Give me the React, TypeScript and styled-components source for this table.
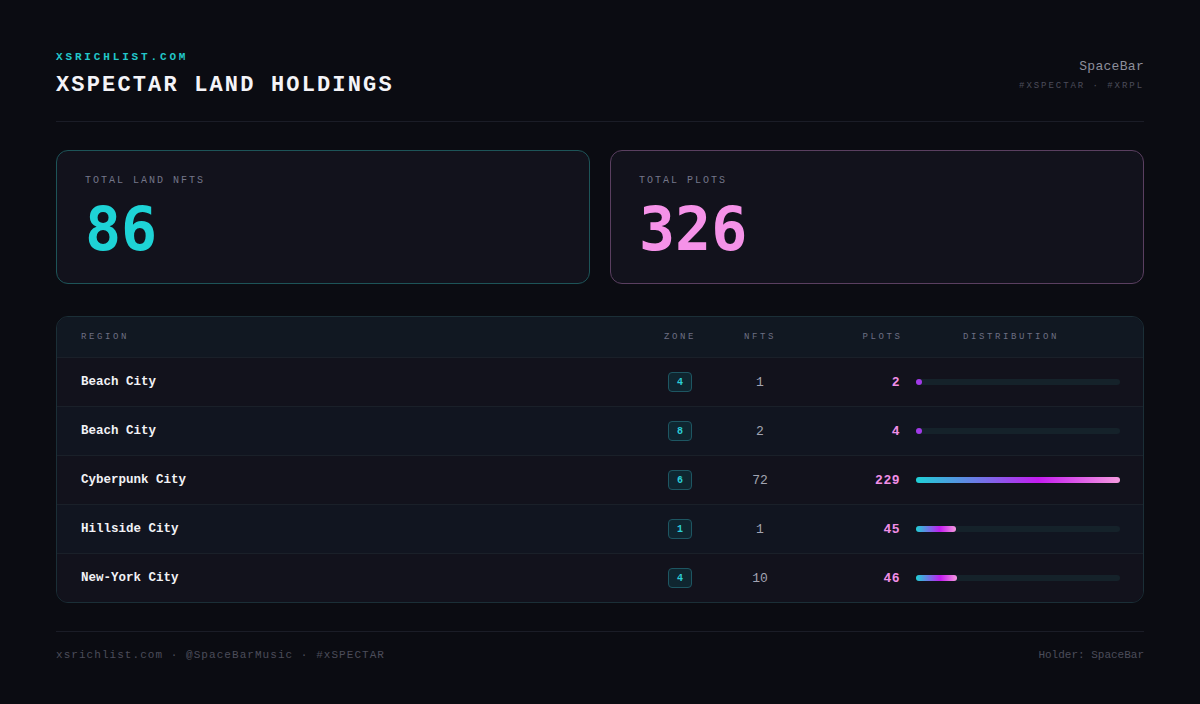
import React from "react";
import styled, { createGlobalStyle } from "styled-components";

const MONO = `"Liberation Mono", "Courier New", monospace`;

const Global = createGlobalStyle`
  html, body { margin: 0; padding: 0; background: #0b0c12; }
  body { font-family: ${MONO}; }
`;

const Page = styled.div`
  width: 1200px;
  height: 704px;
  box-sizing: border-box;
  padding: 51px 56px 0;
  background: #0b0c12;
  display: flex;
  flex-direction: column;
`;

const Header = styled.header`
  display: flex;
  justify-content: space-between;
  align-items: flex-start;
  padding-bottom: 23px;
  border-bottom: 1px solid #1b1d27;
`;

const Brand = styled.div`
  font-size: 11px;
  font-weight: 700;
  letter-spacing: 2.85px;
  color: #22c7c9;
  line-height: 12px;
`;

const Title = styled.h1`
  margin: 11px 0 0;
  font-size: 22px;
  font-weight: 700;
  letter-spacing: 2.15px;
  color: #f4f4f8;
  line-height: 24px;
`;

const Meta = styled.div`
  display: flex;
  flex-direction: column;
  align-items: flex-end;
  padding-top: 8px;
`;

const Owner = styled.div`
  font-size: 13px;
  color: #8d8f9c;
  line-height: 16px;
  letter-spacing: 0.3px;
`;

const Tags = styled.div`
  margin-top: 5px;
  font-size: 9px;
  letter-spacing: 1.95px;
  color: #4b4d5a;
  line-height: 12px;
`;

const Stats = styled.section`
  display: grid;
  grid-template-columns: 1fr 1fr;
  gap: 20px;
  margin-top: 28px;
`;

const StatCard = styled.div<{ $accent: string }>`
  height: 134px;
  box-sizing: border-box;
  border: 1px solid ${(p) => p.$accent};
  border-radius: 12px;
  background: #12121c;
  padding: 24px 28px 0;
`;

const StatLabel = styled.div`
  font-size: 10px;
  letter-spacing: 2px;
  color: #74768a;
  line-height: 12px;
`;

const StatValue = styled.div<{ $color: string }>`
  margin-top: 10px;
  font-family: "DejaVu Sans Mono", monospace;
  font-weight: 700;
  font-size: 60px;
  line-height: 64px;
  color: ${(p) => p.$color};
`;

const Table = styled.section`
  margin-top: 32px;
  border: 1px solid #1b2f37;
  border-radius: 12px;
  overflow: hidden;
  background: #12121c;
`;

const Row = styled.div<{ $alt?: boolean; $head?: boolean }>`
  display: grid;
  grid-template-columns: 1fr 50px 78px 85px 204px;
  column-gap: 16px;
  align-items: center;
  padding: 0 23px 0 24px;
  height: ${(p) => (p.$head ? "40px" : "49px")};
  background: ${(p) => (p.$head ? "#111822" : p.$alt ? "#111520" : "#12121c")};
  border-top: ${(p) => (p.$head ? "none" : "1px solid #1a2029")};
  box-sizing: border-box;
`;

const HeadCell = styled.div<{ $align?: string; $pad?: number }>`
  font-size: 9px;
  letter-spacing: 2.6px;
  color: #6d6f82;
  text-align: ${(p) => p.$align || "left"};
  padding-left: ${(p) => p.$pad || 0}px;
  margin-right: ${(p) => (p.$align === "right" ? "-2.6px" : "0")};
`;

const RegionName = styled.div`
  font-size: 12.5px;
  font-weight: 700;
  color: #f2f2f6;
`;

const ZoneCell = styled.div`
  display: flex;
  justify-content: center;
`;

const ZoneBadge = styled.span`
  width: 24px;
  height: 20px;
  box-sizing: border-box;
  border: 1px solid #1e5662;
  background: #0f2630;
  border-radius: 4px;
  color: #2ccfd8;
  font-size: 10px;
  font-weight: 700;
  display: flex;
  align-items: center;
  justify-content: center;
`;

const Nfts = styled.div`
  text-align: center;
  font-size: 13px;
  color: #a2a4b2;
`;

const Plots = styled.div`
  text-align: right;
  font-size: 13px;
  font-weight: 700;
  color: #f08ee6;
  letter-spacing: 0.5px;
`;

const Track = styled.div`
  height: 6px;
  border-radius: 3px;
  background: #15222a;
`;

const Fill = styled.div`
  height: 6px;
  border-radius: 3px;
  min-width: 6px;
  background: linear-gradient(90deg, #1fd0d6 0%, #7a6be8 35%, #c51cf0 60%, #f59adf 100%);
`;

const Dot = styled.div`
  width: 6px;
  height: 6px;
  border-radius: 3px;
  background: #a23ae8;
`;

const Footer = styled.footer`
  margin-top: 28px;
  border-top: 1px solid #1b1d27;
  padding-top: 16px;
  display: flex;
  justify-content: space-between;
  font-size: 11px;
  color: #4b4d5a;
  line-height: 14px;
`;

const FooterLeft = styled.span`
  letter-spacing: 1.05px;
`;

const rows = [
  { name: "Beach City", zone: 4, nfts: 1, plots: 2 },
  { name: "Beach City", zone: 8, nfts: 2, plots: 4 },
  { name: "Cyberpunk City", zone: 6, nfts: 72, plots: 229 },
  { name: "Hillside City", zone: 1, nfts: 1, plots: 45 },
  { name: "New-York City", zone: 4, nfts: 10, plots: 46 },
];

const max = 229;

export default function App() {
  return (
    <Page>
      <Global />
      <Header>
        <div>
          <Brand>XSRICHLIST.COM</Brand>
          <Title>XSPECTAR LAND HOLDINGS</Title>
        </div>
        <Meta>
          <Owner>SpaceBar</Owner>
          <Tags>#XSPECTAR · #XRPL</Tags>
        </Meta>
      </Header>
      <Stats>
        <StatCard $accent="#1d5458">
          <StatLabel>TOTAL LAND NFTS</StatLabel>
          <StatValue $color="#1ed3d6">86</StatValue>
        </StatCard>
        <StatCard $accent="#5a3f60">
          <StatLabel>TOTAL PLOTS</StatLabel>
          <StatValue $color="#f592e8">326</StatValue>
        </StatCard>
      </Stats>
      <Table>
        <Row $head>
          <HeadCell>REGION</HeadCell>
          <HeadCell $align="center">ZONE</HeadCell>
          <HeadCell $align="center">NFTS</HeadCell>
          <HeadCell $align="right">PLOTS</HeadCell>
          <HeadCell $pad={47}>DISTRIBUTION</HeadCell>
        </Row>
        {rows.map((r, i) => {
          const w = (r.plots / max) * 204;
          return (
            <Row key={i} $alt={i % 2 === 1}>
              <RegionName>{r.name}</RegionName>
              <ZoneCell>
                <ZoneBadge>{r.zone}</ZoneBadge>
              </ZoneCell>
              <Nfts>{r.nfts}</Nfts>
              <Plots>{r.plots}</Plots>
              <Track>
                {w < 8 ? <Dot /> : <Fill style={{ width: `${w}px` }} />}
              </Track>
            </Row>
          );
        })}
      </Table>
      <Footer>
        <FooterLeft>xsrichlist.com · @SpaceBarMusic · #xSPECTAR</FooterLeft>
        <span>Holder: SpaceBar</span>
      </Footer>
    </Page>
  );
}
